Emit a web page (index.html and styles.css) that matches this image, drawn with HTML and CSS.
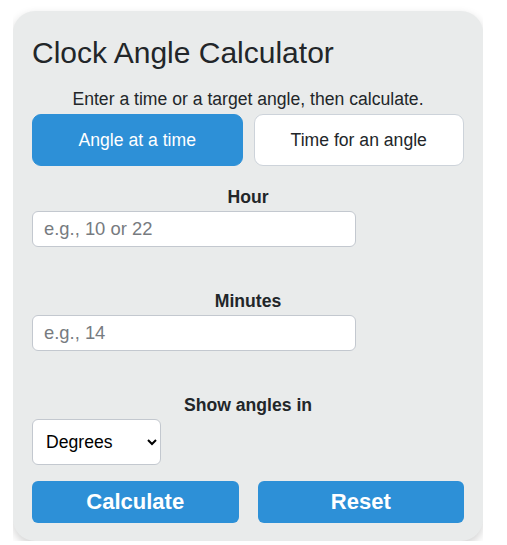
FILE: index.html
```html
<!DOCTYPE html>
<html lang="en">
<head>
<meta charset="utf-8">
<title>Clock Angle Calculator</title>
<link rel="stylesheet" href="styles.css">
</head>
<body>
<div class="page">
  <div class="card">
    <h1 class="title">Clock Angle Calculator</h1>
    <p class="intro">Enter a time or a target angle, then calculate.</p>
    <div class="tabs">
      <button class="tab tab-active" type="button">Angle at a time</button>
      <button class="tab" type="button">Time for an angle</button>
    </div>
    <div class="field field-first">
      <label class="label" for="hour">Hour</label>
      <input class="input" id="hour" type="text" placeholder="e.g., 10 or 22">
    </div>
    <div class="field">
      <label class="label" for="minutes">Minutes</label>
      <input class="input" id="minutes" type="text" placeholder="e.g., 14">
    </div>
    <div class="field">
      <label class="label" for="units">Show angles in</label>
      <select class="select" id="units">
        <option>Degrees</option>
        <option>Radians</option>
      </select>
    </div>
    <div class="actions">
      <button class="action" type="button">Calculate</button>
      <button class="action" type="button">Reset</button>
    </div>
  </div>
</div>
</body>
</html>
```
FILE: styles.css
```css
* { box-sizing: border-box; }
html, body { margin: 0; padding: 0; background: #ffffff; }
body { font-family: "Liberation Sans", Arial, sans-serif; color: #1f2328; }

.page { padding: 11px 0 0 13px; }

.card {
  width: 470px;
  background: #e9ebeb;
  border-radius: 22px;
  padding: 25px 19px 18px 19px;
  box-shadow: 0 4px 10px rgba(0, 0, 0, 0.18);
  clip-path: inset(-20px 0 -20px 0);
}

.title {
  margin: 0 0 19px 0;
  font-size: 30px;
  line-height: 34px;
  font-weight: 400;
  color: #222629;
}

.intro {
  margin: 0 0 5px 0;
  font-size: 17.6px;
  line-height: 20px;
  text-align: center;
  color: #222629;
}

.tabs {
  display: grid;
  grid-template-columns: 1fr 1fr;
  gap: 11px;
}

.tab {
  height: 52px;
  border: 1px solid #cdd3da;
  border-radius: 9px;
  background: #ffffff;
  color: #222629;
  font-family: inherit;
  font-size: 17.6px;
  padding: 0;
}

.tab-active {
  background: #2d90d7;
  border-color: #2d90d7;
  color: #ffffff;
}

.field { margin-top: 44px; }
.field-first { margin-top: 21px; }

.label {
  display: block;
  text-align: center;
  font-weight: 700;
  font-size: 17.6px;
  line-height: 20px;
  margin-bottom: 4px;
  color: #222629;
}

.input {
  display: block;
  width: 324px;
  height: 36px;
  border: 1px solid #c3c8cf;
  border-radius: 6px;
  background: #ffffff;
  padding: 0 11px;
  font-family: inherit;
  font-size: 18.4px;
  color: #222629;
}
.input::placeholder { color: #777b80; }

.select {
  display: block;
  width: 129px;
  height: 46px;
  margin-top: 4px;
  border: 1px solid #c3c8cf;
  border-radius: 6px;
  background: #ffffff;
  padding: 0 8px 0 9px;
  font-family: inherit;
  font-size: 17.6px;
  color: #000000;
}

.actions {
  display: grid;
  grid-template-columns: 1fr 1fr;
  gap: 19px;
  margin-top: 16px;
}

.action {
  height: 42px;
  border: none;
  border-radius: 6px;
  background: #2d90d7;
  color: #ffffff;
  font-family: inherit;
  font-weight: 700;
  font-size: 22px;
  padding: 0;
}
```
